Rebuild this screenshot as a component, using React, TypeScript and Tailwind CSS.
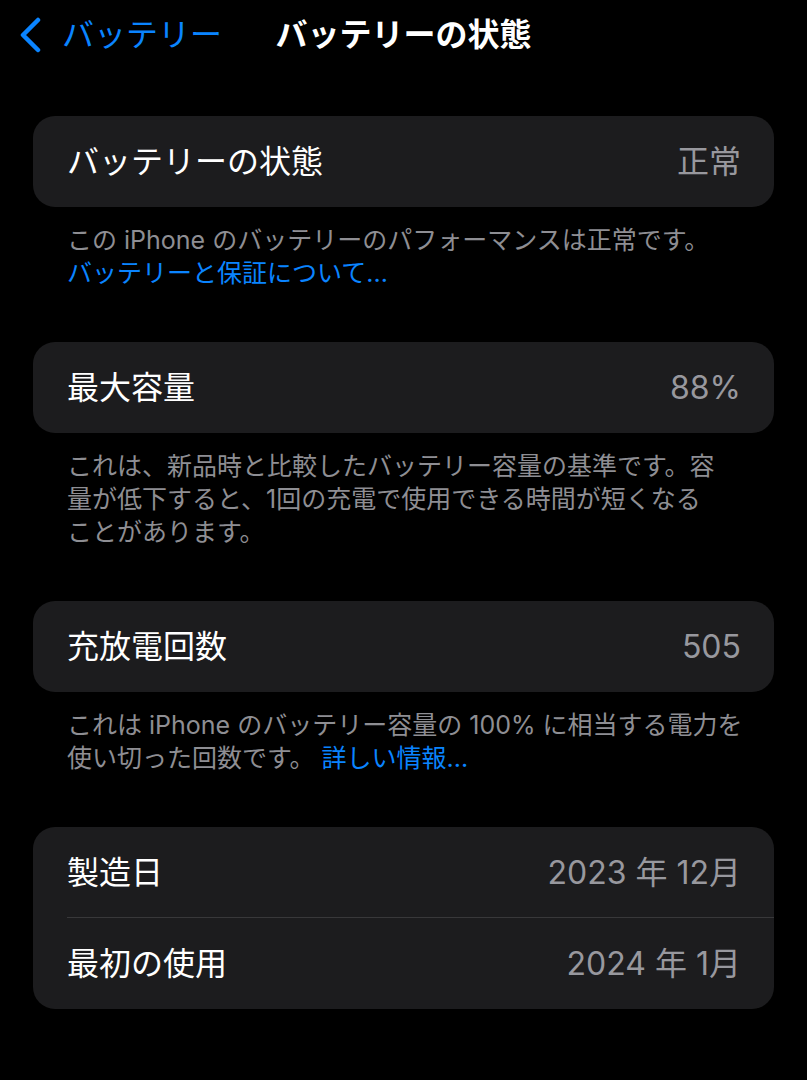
import React from 'react';

const FONT = { fontFamily: 'Inter, "Noto Sans CJK JP", sans-serif' };

function Row({ label, value, divider }: { label: string; value: string; divider?: boolean }) {
  return (
    <div className="relative flex h-[91px] items-center justify-between pl-[34px] pr-[33px]">
      <span className="text-[32px] text-white">{label}</span>
      <span className="text-[32px] text-[#98989e]">{value}</span>
      {divider && <div className="absolute bottom-0 left-[34px] right-0 h-px bg-[#38383a]" />}
    </div>
  );
}

function Card({ children }: { children: React.ReactNode }) {
  return <div className="mx-[33px] overflow-hidden rounded-[22px] bg-[#1c1c1e]">{children}</div>;
}

function Footer({ children }: { children: React.ReactNode }) {
  return (
    <p className="mb-[52px] whitespace-nowrap pl-[67px] pt-[17px] text-[25px] leading-[33px] text-[#8e8e93]">
      {children}
    </p>
  );
}

export default function App() {
  return (
    <div className="min-h-[1080px] w-full bg-black antialiased" style={FONT}>
      {/* nav bar */}
      <div className="grid h-[70px] grid-cols-[1fr_auto_1fr] items-center">
        <div className="flex items-center pl-[18px]">
          <svg width="26" height="36" viewBox="0 0 26 36" className="mr-[18px]">
            <path d="M20 3 L5 18 L20 33" fill="none" stroke="#0a84ff" strokeWidth="4.5" strokeLinecap="round" strokeLinejoin="round" />
          </svg>
          <span className="text-[32px] text-[#0a84ff]">バッテリー</span>
        </div>
        <h1 className="text-[32px] font-semibold text-white">バッテリーの状態</h1>
        <div />
      </div>

      <div className="pt-[46px]">
        <Card>
          <Row label="バッテリーの状態" value="正常" />
        </Card>
        <Footer>
          この iPhone のバッテリーのパフォーマンスは正常です。
          <br />
          <span className="text-[#0a84ff]">バッテリーと保証について...</span>
        </Footer>

        <Card>
          <Row label="最大容量" value="88%" />
        </Card>
        <Footer>
          これは、新品時と比較したバッテリー容量の基準です。容
          <br />
          量が低下すると、1回の充電で使用できる時間が短くなる
          <br />
          ことがあります。
        </Footer>

        <Card>
          <Row label="充放電回数" value="505" />
        </Card>
        <Footer>
          これは iPhone のバッテリー容量の 100% に相当する電力を
          <br />
          使い切った回数です。 <span className="text-[#0a84ff]">詳しい情報...</span>
        </Footer>

        <Card>
          <Row label="製造日" value="2023 年 12月" divider />
          <Row label="最初の使用" value="2024 年 1月" />
        </Card>
      </div>
    </div>
  );
}
